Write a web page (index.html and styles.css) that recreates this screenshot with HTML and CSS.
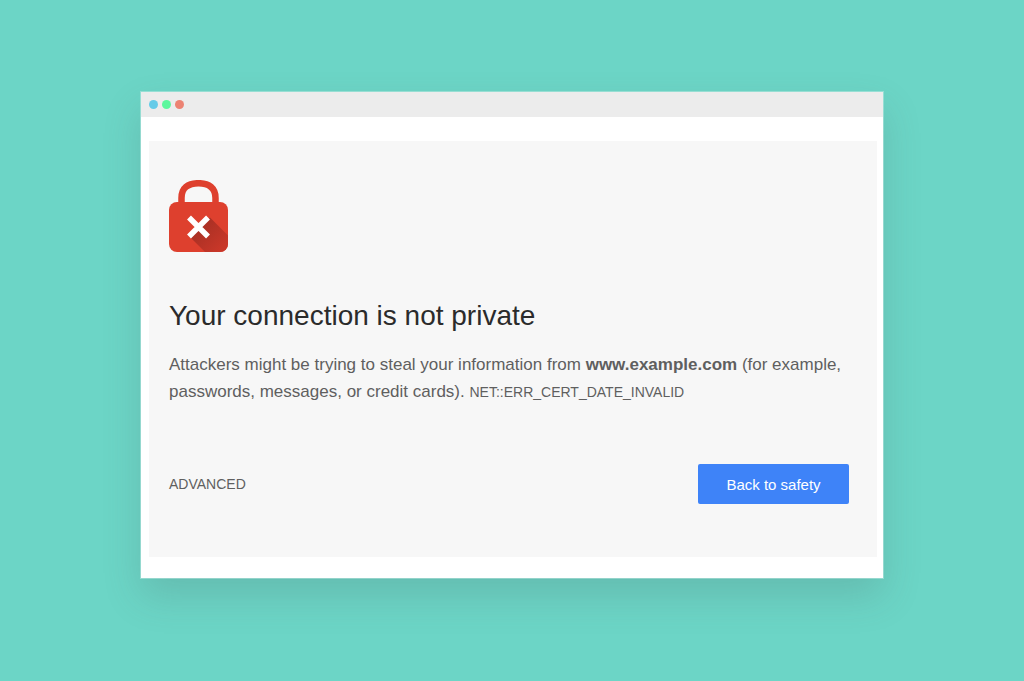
FILE: index.html
```
<!DOCTYPE html>
<html lang="en">
<head>
  <meta charset="UTF-8">
  <meta name="viewport" content="width=device-width, initial-scale=1.0">
  <title>Privacy error</title>
  <link rel="stylesheet" href="styles.css">
</head>
<body>
  <div class="window">
    <div class="titlebar">
      <span class="dot blue"></span>
      <span class="dot green"></span>
      <span class="dot red"></span>
    </div>

    <main class="warning">
      <svg class="lock" width="59" height="73" viewBox="0 0 59 73" aria-hidden="true">
        <defs>
          <linearGradient id="shade" gradientUnits="userSpaceOnUse" x1="30" y1="46" x2="52" y2="68">
            <stop offset="0" stop-color="#a83024"/>
            <stop offset="1" stop-color="#c83729"/>
          </linearGradient>
          <clipPath id="body">
            <rect y="22" width="59" height="50" rx="8"/>
          </clipPath>
        </defs>
        <path d="M12.500 26V18C12.500 8 19 3.200 29.500 3.200S46.500 8 46.500 18V26" fill="none" stroke="#de402e" stroke-width="6.500"/>
        <rect y="22" width="59" height="50" rx="8" fill="#de402e"/>
        <path d="M41 37.500L64 60.500V78H42L20 56Z" fill="url(#shade)" clip-path="url(#body)"/>
        <path d="M20 37.500L39 56.500M39 37.500L20 56.500" stroke="#fff" stroke-width="5.500"/>
      </svg>

      <h1>Your connection is not private</h1>
      <p>Attackers might be trying to steal your information from <strong>www.example.com</strong> (for example, passwords, messages, or credit cards). <span class="code">NET::ERR_CERT_DATE_INVALID</span></p>

      <div class="actions">
        <a class="advanced" href="#">ADVANCED</a>
        <button class="back" type="button">Back to safety</button>
      </div>
    </main>
  </div>
</body>
</html>
```
FILE: styles.css
```
* {
  box-sizing: border-box;
}
body {
  margin: 0;
  padding: 92px 20px;
  background: #6cd5c6;
  font-family: "Helvetica Neue", Helvetica, "Liberation Sans", Arial, sans-serif;
  color: #5f5f5f;
}
.window {
  max-width: 742px;
  margin: 0 auto;
  padding-bottom: 21px;
  background: #fff;
  box-shadow: 0 0 0 1px rgba(255, 255, 255, 0.3), 0 18px 36px rgba(70, 90, 90, 0.2);
}
.titlebar {
  display: flex;
  align-items: center;
  gap: 4px;
  height: 25px;
  padding: 0 8px;
  background: #ececec;
}
.dot {
  width: 9px;
  height: 9px;
  border-radius: 50%;
}
.blue {
  background: #66cbe8;
}
.green {
  background: #5cf79d;
}
.red {
  background: #ec8373;
}
.warning {
  margin: 24px 6px 0 8px;
  padding: 39px 28px 53px 20px;
  background: #f7f7f7;
}
.lock {
  display: block;
}
h1 {
  margin: 46px 0 18px;
  font-size: 28px;
  font-weight: normal;
  line-height: 34px;
  color: #2b2b2b;
}
p {
  margin: 0;
  font-size: 17px;
  line-height: 27px;
}
.code {
  font-size: 14px;
}
.actions {
  display: flex;
  justify-content: space-between;
  align-items: center;
  margin-top: 58px;
}
.advanced {
  font-size: 14px;
  color: #5f5f5f;
  text-decoration: none;
}
.back {
  width: 151px;
  height: 40px;
  border: none;
  border-radius: 2px;
  background: #3e83f8;
  color: #fff;
  font-family: inherit;
  font-size: 15px;
  cursor: pointer;
}
.back:hover {
  background: #3274e6;
}
```
